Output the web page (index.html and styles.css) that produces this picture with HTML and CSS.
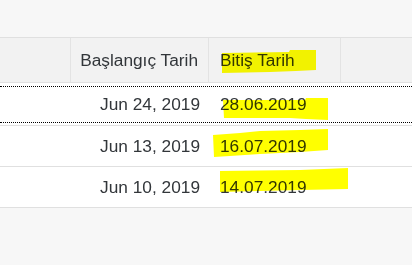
FILE: index.html
```html
<!DOCTYPE html>
<html lang="tr">
<head>
<meta charset="utf-8">
<title>Tablo</title>
<link rel="stylesheet" href="styles.css">
</head>
<body>
<div class="page">
  <div class="toolbar"></div>
  <div class="table">
    <div class="row head">
      <div class="cell hcell"></div>
      <div class="cell hcell right">Başlangıç Tarih</div>
      <div class="cell hcell left">Bitiş Tarih</div>
      <div class="cell hcell last"></div>
    </div>
    <div class="row body focused">
      <div class="cell"></div>
      <div class="cell right">Jun 24, 2019</div>
      <div class="cell left">28.06.2019</div>
      <div class="cell"></div>
    </div>
    <div class="row body">
      <div class="cell"></div>
      <div class="cell right">Jun 13, 2019</div>
      <div class="cell left">16.07.2019</div>
      <div class="cell"></div>
    </div>
    <div class="row body">
      <div class="cell"></div>
      <div class="cell right">Jun 10, 2019</div>
      <div class="cell left">14.07.2019</div>
      <div class="cell"></div>
    </div>
  </div>
  <div class="rest"></div>
  <svg class="marker" width="412" height="265" viewBox="0 0 412 265" aria-hidden="true">
    <polygon points="222,53 289,52 290,50 316,50 316,70 296,71 270,72 222,73"/>
    <polygon points="223,100 305,100 306,98 328,98 328,120 306,119 290,118 224,118"/>
    <polygon points="213,135 240,133 260,131 300,130 328,129 328,150 300,152 260,154 230,156 214,157"/>
    <polygon points="220,171 300,170 348,168 348,189 300,190 220,192"/>
  </svg>
</div>
</body>
</html>
```
FILE: styles.css
```css
html, body {
  margin: 0;
  padding: 0;
  background: #f7f7f7;
}
.page {
  position: relative;
  width: 412px;
  height: 265px;
  overflow: hidden;
  font-family: "Liberation Sans", Arial, sans-serif;
  font-size: 17.3px;
  color: #32363a;
  display: flex;
  flex-direction: column;
}
.toolbar {
  height: 37px;
  background: #f7f7f7;
  flex: none;
}
.table {
  flex: none;
  display: flex;
  flex-direction: column;
}
.row {
  display: grid;
  grid-template-columns: 71px 138px 132px 1fr;
}
.head {
  background: #f2f2f2;
  border-top: 1px solid #e0e0e0;
  border-bottom: 1px solid #e0e0e0;
  height: 44px;
}
.hcell {
  border-right: 1px solid #e3e3e3;
}
.hcell.last {
  border-right: none;
}
.cell {
  display: flex;
  align-items: center;
  white-space: nowrap;
}
.cell.right {
  justify-content: flex-end;
  padding-right: 9px;
}
.cell.left {
  padding-left: 11px;
}
.head .cell.right {
  padding-right: 10px;
}
.body {
  background: #fff;
  border-bottom: 1px solid #e0e0e0;
  height: 40px;
}
.focused {
  position: relative;
  height: 42px;
}
.focused::after {
  content: "";
  position: absolute;
  left: 0;
  right: 0;
  top: 3px;
  bottom: 2px;
  border-top: 1px dotted #000;
  border-bottom: 1px dotted #000;
  pointer-events: none;
}
.rest {
  flex: 1;
  background: #f7f7f7;
}
.marker {
  position: absolute;
  left: 0;
  top: 0;
  mix-blend-mode: multiply;
  pointer-events: none;
}
.marker polygon {
  fill: #ffff00;
}
```
